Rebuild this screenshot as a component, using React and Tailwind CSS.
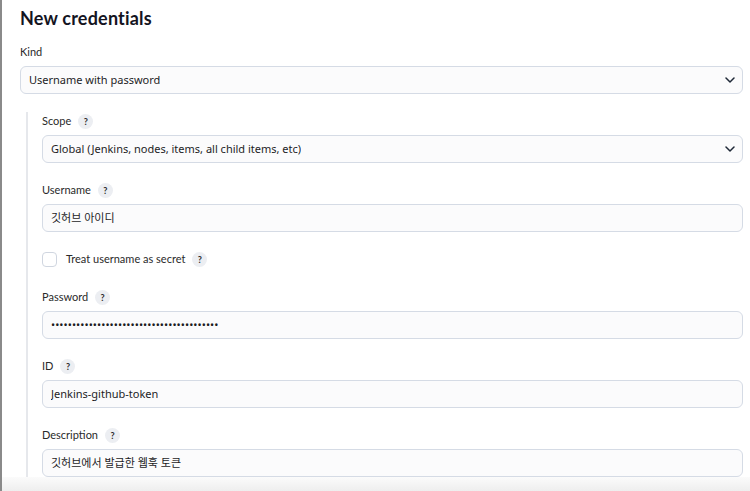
const FONT = { fontFamily: '"Noto Sans", "Noto Sans CJK KR", sans-serif' };
const LABEL_FONT = { fontFamily: 'Lato, "Noto Sans CJK KR", sans-serif' };

function Help() {
  return (
    <span className="inline-flex items-center justify-center w-[15px] h-[15px] rounded-full bg-[#eceef2] text-[9px] font-bold text-[#2b2b2b] leading-none">
      ?
    </span>
  );
}

function Chevron() {
  return (
    <svg width="10" height="6" viewBox="0 0 10 6" className="shrink-0">
      <polyline points="1,1 5,5 9,1" fill="none" stroke="#1f2937" strokeWidth="1.5" strokeLinecap="round" strokeLinejoin="round" />
    </svg>
  );
}

function Box({ children, select }) {
  return (
    <div className="h-[28px] flex items-center justify-between rounded-[6px] border border-[#d5dbe5] bg-[#fbfbfc] pl-[8px] pr-[7px] text-[11px] text-[#1d1d1f]">
      <span className="truncate">{children}</span>
      {select && <Chevron />}
    </div>
  );
}

function Label({ text, help = true }) {
  return (
    <div className="h-[18px] flex items-center gap-[7px] text-[11px] text-[#2a2a2a]" style={LABEL_FONT}>
      <span>{text}</span>
      {help && <Help />}
    </div>
  );
}

function Field({ label, children, select, className = '' }) {
  return (
    <div className={`flex flex-col gap-[5px] ${className}`}>
      <Label text={label} />
      <Box select={select}>{children}</Box>
    </div>
  );
}

export default function App() {
  return (
    <div
      className="w-[750px] h-[491px] overflow-hidden bg-white border-l-2 border-[#8a8a8a] flex flex-col"
      style={FONT}
    >
      <div className="pl-[18px] pr-[7px] flex flex-col">
        {/* Title */}
        <h1
          className="h-[36px] flex items-center text-[18px] font-bold text-[#14141f] tracking-[0.2px]"
          style={LABEL_FONT}
        >
          New credentials
        </h1>

        {/* Kind */}
        <div className="flex flex-col gap-[5px] mt-[7px]">
          <div className="h-[18px] flex items-center text-[11px] text-[#2a2a2a]" style={LABEL_FONT}>
            Kind
          </div>
          <Box select>Username with password</Box>
        </div>

        {/* Nested credential fields */}
        <div className="mt-[18px] ml-[6px] border-l-2 border-[#e6e8ec] pl-[14px] flex flex-col">
          <Field label="Scope" select>
            Global (Jenkins, nodes, items, all child items, etc)
          </Field>
          <Field label="Username" className="mt-[18px]">
            깃허브 아이디
          </Field>

          <div className="mt-[18px] mb-[20px] h-[18px] flex items-center gap-[9px]">
            <span className="w-[15px] h-[15px] rounded-[4px] border border-[#d0d6e0] bg-white" />
            <div className="flex items-center gap-[7px] text-[11px] text-[#2a2a2a]" style={LABEL_FONT}>
              <span>Treat username as secret</span>
              <Help />
            </div>
          </div>

          <Field label="Password">
            <span className="text-[11px] tracking-[0.05px]">{'•'.repeat(40)}</span>
          </Field>
          <Field label="ID" className="mt-[18px]">
            Jenkins-github-token
          </Field>
          <Field label="Description" className="mt-[18px]">
            깃허브에서 발급한 웹훅 토큰
          </Field>
        </div>
      </div>

      {/* Sticky footer shadow */}
      <div className="flex-1 bg-gradient-to-b from-[#fbfbfb] to-[#eeeeee]" />
    </div>
  );
}
